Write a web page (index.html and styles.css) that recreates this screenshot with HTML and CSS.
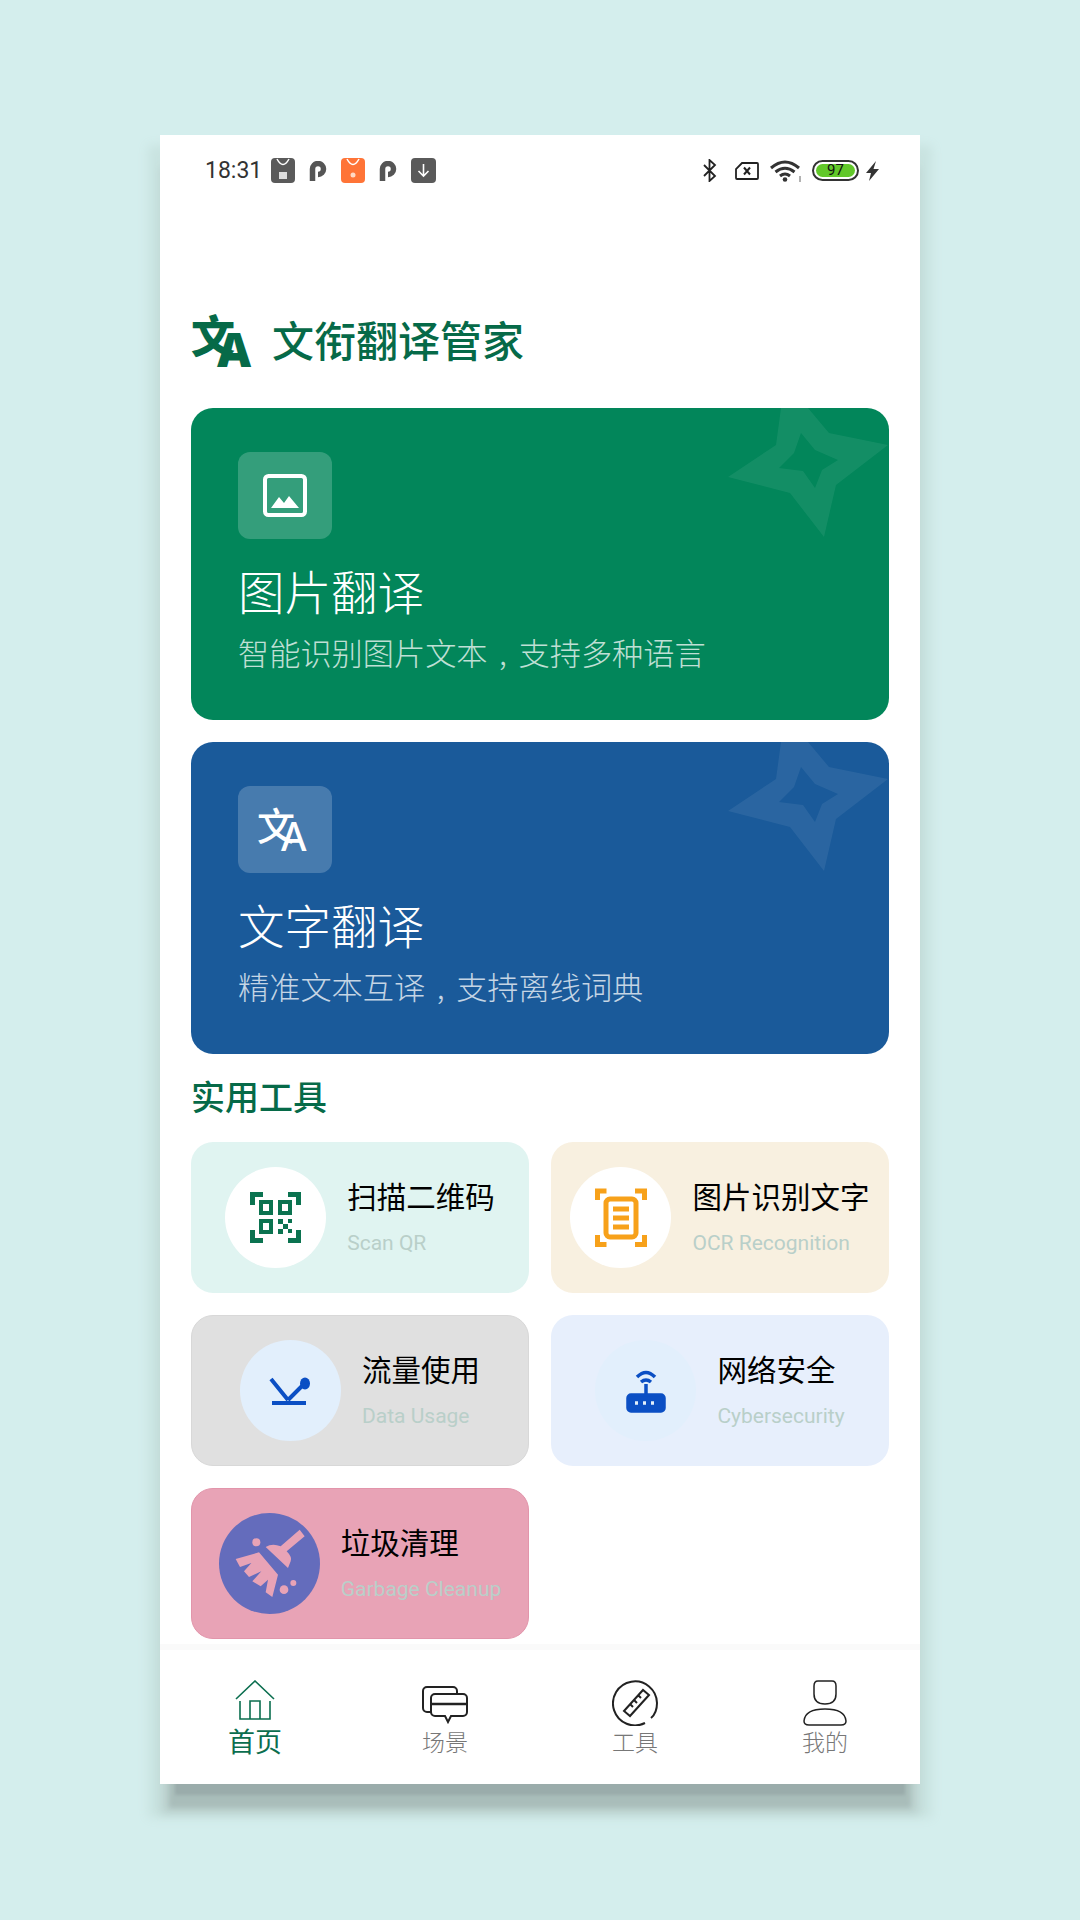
FILE: index.html
```html
<!DOCTYPE html>
<html lang="zh-CN">
<head>
    <meta charset="UTF-8">
    <meta name="viewport" content="width=device-width, initial-scale=1.0">
    <title>文衔翻译管家</title>
    <link rel="stylesheet" href="styles.css">
</head>
<body>
    <div class="phone">
        <!-- Status bar -->
        <div class="status-bar">
            <div class="status-left">
                <span class="time">18:31</span>
                <span class="tile tile-gray">
                    <svg width="24" height="25" viewBox="0 0 24 25"><path d="M6 1q6 11 12 0" fill="none" stroke="#fff" stroke-width="1.500"/><path d="M8 14h8v7H8z" fill="#ddd"/></svg>
                </span>
                <svg class="p-icon" width="18" height="20" viewBox="0 0 18 20"><path d="M3.500 20V8a5.500 5.500 0 1 1 5.500 5.500" fill="none" stroke="#555" stroke-width="5.500"/></svg>
                <span class="tile tile-orange">
                    <svg width="24" height="25" viewBox="0 0 24 25"><path d="M6 1q6 11 12 0" fill="none" stroke="#fff" stroke-width="1.500"/><circle cx="12" cy="17" r="2.500" fill="#ffd9c4"/></svg>
                </span>
                <svg class="p-icon" width="18" height="20" viewBox="0 0 18 20"><path d="M3.500 20V8a5.500 5.500 0 1 1 5.500 5.500" fill="none" stroke="#555" stroke-width="5.500"/></svg>
                <span class="tile tile-gray tile-wide">
                    <svg width="25" height="25" viewBox="0 0 25 25"><path d="M12.500 6v12M7.500 13l5 5 5-5" fill="none" stroke="#fff" stroke-width="1.600"/></svg>
                </span>
            </div>
            <div class="status-right">
                <svg class="bt" width="15" height="23" viewBox="0 0 15 23"><path d="M2 6l11 11-5.500 5V1l5.500 5L2 17" fill="none" stroke="#222" stroke-width="1.800"/></svg>
                <svg class="sim" width="24" height="18" viewBox="0 0 24 18"><path d="M7 1h15a1 1 0 0 1 1 1v14a1 1 0 0 1-1 1H2a1 1 0 0 1-1-1V7z" fill="none" stroke="#222" stroke-width="1.800"/><path d="M9 5.500l6 7M15 5.500l-6 7" stroke="#222" stroke-width="2"/></svg>
                <svg width="32" height="22" viewBox="0 0 32 22"><path d="M1 8q14-12 28 0M5.500 12q9.500-7.500 19 0M10 16q5-4 10 0" fill="none" stroke="#333" stroke-width="3"/><circle cx="15" cy="19.500" r="2.300" fill="#333"/><path d="M30 16v6" stroke="#999" stroke-width="1.500"/></svg>
                <span class="battery"><span class="battery-fill">97</span></span>
                <svg width="13" height="20" viewBox="0 0 13 20"><path d="M10 0L0 12h5L3 20 13 8H7.500z" fill="#333"/></svg>
            </div>
        </div>

        <div class="content">
            <!-- App title -->
            <div class="brand">
                <span class="logo"><span class="logo-wen">文</span><span class="logo-a">A</span></span>
                <h1>文衔翻译管家</h1>
            </div>

            <!-- Main features -->
            <div class="feature feature-green">
                <svg class="star" width="698" height="140" viewBox="0 0 698 140"><path fill-rule="evenodd" d="M590 0H617L638 25 697 37 645 77 633 129 599 85 537 69 585 37ZM610 25L603 45 588 60 612 63 624 80 631 62 647 52 624 42Z"/></svg>
                <span class="feature-icon">
                    <svg width="44" height="43" viewBox="0 0 44 43"><rect x="2" y="2" width="40" height="39" rx="3.500" fill="none" stroke="#fff" stroke-width="4"/><path d="M8 34l8-11 5 6 5-7 10 12z" fill="#fff"/></svg>
                </span>
                <div class="feature-title">图片翻译</div>
                <div class="feature-sub">智能识别图片文本<span class="comma">,</span>支持多种语言</div>
            </div>
            <div class="feature feature-blue">
                <svg class="star" width="698" height="140" viewBox="0 0 698 140"><path fill-rule="evenodd" d="M590 0H617L638 25 697 37 645 77 633 129 599 85 537 69 585 37ZM610 25L603 45 588 60 612 63 624 80 631 62 647 52 624 42Z"/></svg>
                <span class="feature-icon">
                    <span class="logo logo-small"><span class="logo-wen">文</span><span class="logo-a">A</span></span>
                </span>
                <div class="feature-title">文字翻译</div>
                <div class="feature-sub">精准文本互译<span class="comma">,</span>支持离线词典</div>
            </div>

            <!-- Tools -->
            <h2 class="section-title">实用工具</h2>
            <div class="tools">
                <div class="tool tool-mint">
                    <span class="tool-icon">
                        <svg width="51" height="51" viewBox="0 0 51 51" fill="none" stroke="#0b7350" stroke-width="5">
                            <path d="M2.500 13V2.500H13M38 2.500h10.500V13M2.500 38v10.500H13M38 48.500h10.500V38"/>
                            <rect x="11" y="10" width="10" height="11" stroke-width="4"/><rect x="30" y="10" width="10" height="11" stroke-width="4"/><rect x="11" y="29" width="10" height="11" stroke-width="4"/>
                            <path d="M28 27h5v5h-5zM38 27h4v4h-4zM33 32h5v5h-5zM28 37h5v5h-5zM38 37h4v4h-4z" fill="#0b7350" stroke="none"/>
                        </svg>
                    </span>
                    <div class="tool-text"><div class="tool-name">扫描二维码</div><div class="tool-en">Scan QR</div></div>
                </div>
                <div class="tool tool-cream">
                    <span class="tool-icon">
                        <svg width="52" height="59" viewBox="0 0 52 59" fill="none" stroke="#f7a11a" stroke-width="5">
                            <path d="M2.500 12V3h9M40 3h9.500v9M2.500 47v9.500h9M40 56.500h9.500V47"/>
                            <rect x="11" y="11" width="30" height="38" rx="4"/>
                            <path d="M18 21h16M18 30h16M18 39h16"/>
                        </svg>
                    </span>
                    <div class="tool-text"><div class="tool-name">图片识别文字</div><div class="tool-en">OCR Recognition</div></div>
                </div>
                <div class="tool tool-gray">
                    <span class="tool-icon icon-pale">
                        <svg width="42" height="28" viewBox="0 0 42 28" fill="none" stroke="#0b4fc4" stroke-width="4">
                            <path d="M2 2l17 21M19 23L33 9M3 26h34"/>
                            <ellipse cx="36" cy="6.500" rx="5" ry="6" fill="#0b4fc4" stroke="none"/>
                        </svg>
                    </span>
                    <div class="tool-text"><div class="tool-name">流量使用</div><div class="tool-en">Data Usage</div></div>
                </div>
                <div class="tool tool-blue">
                    <span class="tool-icon icon-pale">
                        <svg width="40" height="44" viewBox="0 0 40 44" fill="none" stroke="#0b4fc4" stroke-width="3.500">
                            <path d="M11 8q9-9 18 0M15 13q5-4 10 0M20 15v11"/>
                            <rect x="2" y="26" width="36" height="16" rx="3" fill="#0b4fc4"/>
                            <path d="M9 34h3M17 34h3M25 34h3" stroke="#e3effb" stroke-width="3.500"/>
                        </svg>
                    </span>
                    <div class="tool-text"><div class="tool-name">网络安全</div><div class="tool-en">Cybersecurity</div></div>
                </div>
                <div class="tool tool-pink">
                    <span class="tool-icon icon-purple">
                        <svg width="101" height="101" viewBox="115 130 303 303" fill="#e8a3b6">
                            <path d="M357 180L372 200 318 245Q335 262 330 275L322 295 255 232Q275 220 300 230Z"/>
                            <path d="M165 268L235 248 292 315 275 382 255 368 262 330 240 350 215 335 242 305 205 322 190 305 212 280 178 292Z"/>
                            <circle cx="227" cy="218" r="12"/><circle cx="310" cy="360" r="13"/><circle cx="338" cy="340" r="9"/>
                        </svg>
                    </span>
                    <div class="tool-text"><div class="tool-name">垃圾清理</div><div class="tool-en">Garbage Cleanup</div></div>
                </div>
            </div>
        </div>

        <!-- Bottom nav -->
        <div class="nav">
            <div class="nav-item nav-active">
                <div class="nav-icon"><svg width="40" height="40" viewBox="0 0 40 40" fill="none" stroke="#0b6e4f" stroke-width="1.600"><path d="M1 19L20 1l19 18M5 21v18h30V21M15 39V21h10v18"/></svg></div>
                <span>首页</span>
            </div>
            <div class="nav-item">
                <div class="nav-icon"><svg class="icon-chat" width="46" height="38" viewBox="0 0 46 38" fill="none" stroke="#222" stroke-width="2"><path d="M9 26H5a4 4 0 0 1-4-4V5a4 4 0 0 1 4-4h26a4 4 0 0 1 4 4v3"/><path d="M13 8h28a4 4 0 0 1 4 4v14a4 4 0 0 1-4 4H29l-3 6-3-6h-10a4 4 0 0 1-4-4V12a4 4 0 0 1 4-4z"/><path d="M10 18h34" stroke-width="2.500"/></svg></div>
                <span>场景</span>
            </div>
            <div class="nav-item">
                <div class="nav-icon"><svg width="46" height="46" viewBox="0 0 46 46" fill="none" stroke="#222" stroke-width="2"><path d="M33 43A22 22 0 1 1 45 23q0 10-6 15"/><path d="M12 31L31 10l6 5-19 21zM18 24l3 3M22 20l3 3M26 15l3 3"/></svg></div>
                <span>工具</span>
            </div>
            <div class="nav-item">
                <div class="nav-icon"><svg width="44" height="46" viewBox="0 0 44 46" fill="none" stroke="#222" stroke-width="1.500"><path d="M15 1h14q4 0 4 5v8q0 10-11 10T11 14V6q0-5 4-5z"/><path d="M6 45q-5 0-5-4 1-12 21-12t21 12q0 4-5 4z"/></svg></div>
                <span>我的</span>
            </div>
        </div>
    </div>
</body>
</html>
```

FILE: styles.css
```css
/* General Styles */
body {
    margin: 0;
    padding: 135px 0 0 160px;
    height: 1920px;
    box-sizing: border-box;
    background: #d4eeed;
    font-family: "Noto Sans CJK SC", "Noto Sans", sans-serif;
    overflow: hidden;
}

.phone {
    width: 760px;
    height: 1649px;
    background: #fff;
    display: flex;
    flex-direction: column;
    box-shadow: 0 26px 3px -15px #9aacab, 0 33px 5px -9px #a9bdba, 0 31px 8px -1px #bcd2cf, 0 22px 10px 12px #c9e3e0;
}

/* Status bar */
.status-bar {
    height: 70px;
    padding: 22px 41px 0 46px;
    box-sizing: border-box;
    display: flex;
    justify-content: space-between;
    align-items: flex-start;
}

.status-left,
.status-right {
    display: flex;
    align-items: center;
    height: 27px;
}

.status-left { gap: 14px; }
.status-right { gap: 10px; }
.bt { margin-right: 8px; }
.sim { margin-right: 1px; }

.time {
    font-family: Roboto, sans-serif;
    font-size: 23px;
    color: #333;
    width: 53px;
    margin-left: -1px;
    margin-right: -1px;
}

.tile {
    width: 24px;
    height: 25px;
    border-radius: 4px;
    display: flex;
}

.tile-gray { background: #5a5a5a; }
.tile-orange { background: #ff7437; }
.tile-wide { width: 25px; }

.battery {
    width: 47px;
    height: 21px;
    margin-right: -3px;
    border: 2px solid #333;
    border-radius: 11px;
    box-sizing: border-box;
    padding: 2px;
    display: flex;
}

.battery-fill {
    flex: 1;
    background: #62c82a;
    border-radius: 7px;
    font-family: Roboto, sans-serif;
    font-size: 15px;
    line-height: 13px;
    text-align: center;
    color: #111;
}

/* Content */
.content {
    flex: 1;
    padding: 0 31px;
}

.brand {
    display: flex;
    align-items: center;
    margin: 107px 0 36px;
    height: 60px;
    color: #066a48;
}

h1 {
    margin: 0 0 0 21px;
    padding-bottom: 6px;
    font-size: 42px;
    font-weight: 500;
    line-height: 54px;
}

.logo {
    display: flex;
    width: 60px;
    height: 60px;
    font-weight: 900;
    color: #066a48;
}

.logo-wen {
    font-size: 44px;
    line-height: 44px;
}

.logo-a {
    font-family: "Noto Sans", sans-serif;
    font-size: 47px;
    line-height: 44px;
    margin: 15px 0 0 -18px;
}

.logo-small {
    width: 56px;
    height: 50px;
    color: #fff;
    font-weight: 500;
}

.logo-small .logo-wen { font-size: 38px; line-height: 38px; }
.logo-small .logo-a { font-size: 39px; line-height: 36px; margin: 13px 0 0 -14px; }

/* Feature cards */
.feature {
    position: relative;
    height: 312px;
    margin-bottom: 22px;
    padding: 44px 47px 0;
    box-sizing: border-box;
    border-radius: 22px;
    overflow: hidden;
    color: #fff;
}

.feature-green { background: #02865a; }
.feature-blue { background: #1a5a9a; margin-bottom: 0; }

.star {
    position: absolute;
    top: 0;
    left: 0;
    fill: rgba(255, 255, 255, 0.07);
}

.feature-icon {
    width: 94px;
    height: 87px;
    border-radius: 12px;
    background: rgba(255, 255, 255, 0.2);
    display: flex;
    align-items: center;
    justify-content: center;
}

.feature-title {
    margin-top: 17px;
    font-size: 46.500px;
    font-weight: 300;
    line-height: 68px;
}

.feature-sub {
    margin-top: 5px;
    font-size: 31.200px;
    font-weight: 300;
    line-height: 46px;
    color: rgba(255, 255, 255, 0.75);
}

.comma {
    display: inline-block;
    width: 31px;
    text-align: center;
}

/* Tools */
.section-title {
    margin: 0;
    height: 88px;
    line-height: 84px;
    font-size: 34px;
    font-weight: 500;
    color: #066a48;
}

.tools {
    display: grid;
    grid-template-columns: 338px 338px;
    gap: 22px;
}

.tool {
    height: 151px;
    box-sizing: border-box;
    border-radius: 22px;
    display: flex;
    align-items: center;
    justify-content: center;
    gap: 21px;
}

.tool-mint { background: #e0f4f1; }
.tool-cream { background: #f8f0e0; }
.tool-gray { background: #e0e0e0; border: 1px solid #d8d8d8; }
.tool-blue { background: #e7effc; }
.tool-pink { background: #e8a3b6; border: 1px solid #e295ab; }

.tool-icon {
    width: 101px;
    height: 101px;
    border-radius: 50%;
    background: #fff;
    display: flex;
    align-items: center;
    justify-content: center;
    flex-shrink: 0;
}

.icon-pale { background: #e2effc; }
.icon-purple { background: #646cbc; }

.tool-text { padding-bottom: 4px; }

.tool-name {
    font-size: 29.500px;
    line-height: 44px;
    color: #000;
    white-space: nowrap;
}

.tool-en {
    font-family: Roboto, sans-serif;
    font-size: 21px;
    line-height: 30px;
    margin-top: 11px;
    color: #b9cfc9;
    white-space: nowrap;
}

/* Bottom nav */
.nav {
    height: 140px;
    box-sizing: border-box;
    border-top: 6px solid #fafafa;
    display: grid;
    grid-template-columns: repeat(4, 1fr);
    padding-top: 30px;
}

.nav-item {
    display: flex;
    flex-direction: column;
    align-items: center;
    font-size: 23px;
    font-weight: 300;
    line-height: 30px;
    color: #777;
}

.nav-icon {
    height: 46px;
    display: flex;
    align-items: flex-start;
}

.icon-chat { margin-top: 6px; }

.nav-active {
    font-size: 27px;
    line-height: 34px;
    font-weight: 400;
    color: #0b6e4f;
}

.nav-active .nav-icon { height: 44px; }
```
